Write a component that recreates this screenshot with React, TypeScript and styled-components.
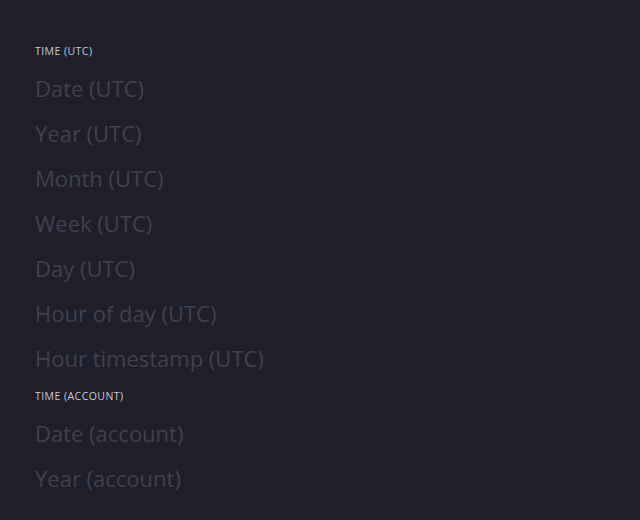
import React from "react";
import styled, { createGlobalStyle } from "styled-components";

const Global = createGlobalStyle`
  html, body { margin: 0; padding: 0; background: #1f1f2b; }
  body { font-family: "Open Sans", "Liberation Sans", sans-serif; }
`;

const Page = styled.div`
  width: 640px;
  height: 520px;
  overflow: hidden;
  background: #1f1f2b;
  padding: 44px 35px 0;
  box-sizing: border-box;
  display: flex;
  flex-direction: column;
  gap: 8px;
`;

const Header = styled.div`
  font-size: 10.5px;
  line-height: 14px;
  letter-spacing: 0.45px;
  color: #c9c9d3;
  text-transform: uppercase;
  height: 14px;
  margin-bottom: 8px;
`;

const Item = styled.div`
  font-size: 22px;
  line-height: 45px;
  height: 45px;
  color: #41414f;
  white-space: nowrap;
`;

const Group = styled.section`
  display: flex;
  flex-direction: column;
`;

const groups = [
  {
    title: "Time (UTC)",
    items: [
      "Date (UTC)",
      "Year (UTC)",
      "Month (UTC)",
      "Week (UTC)",
      "Day (UTC)",
      "Hour of day (UTC)",
      "Hour timestamp (UTC)",
    ],
  },
  {
    title: "Time (account)",
    items: ["Date (account)", "Year (account)"],
  },
];

export default function App() {
  return (
    <>
      <Global />
      <Page>
        {groups.map((g) => (
          <Group key={g.title}>
            <Header>{g.title}</Header>
            {g.items.map((i) => (
              <Item key={i}>{i}</Item>
            ))}
          </Group>
        ))}
      </Page>
    </>
  );
}
